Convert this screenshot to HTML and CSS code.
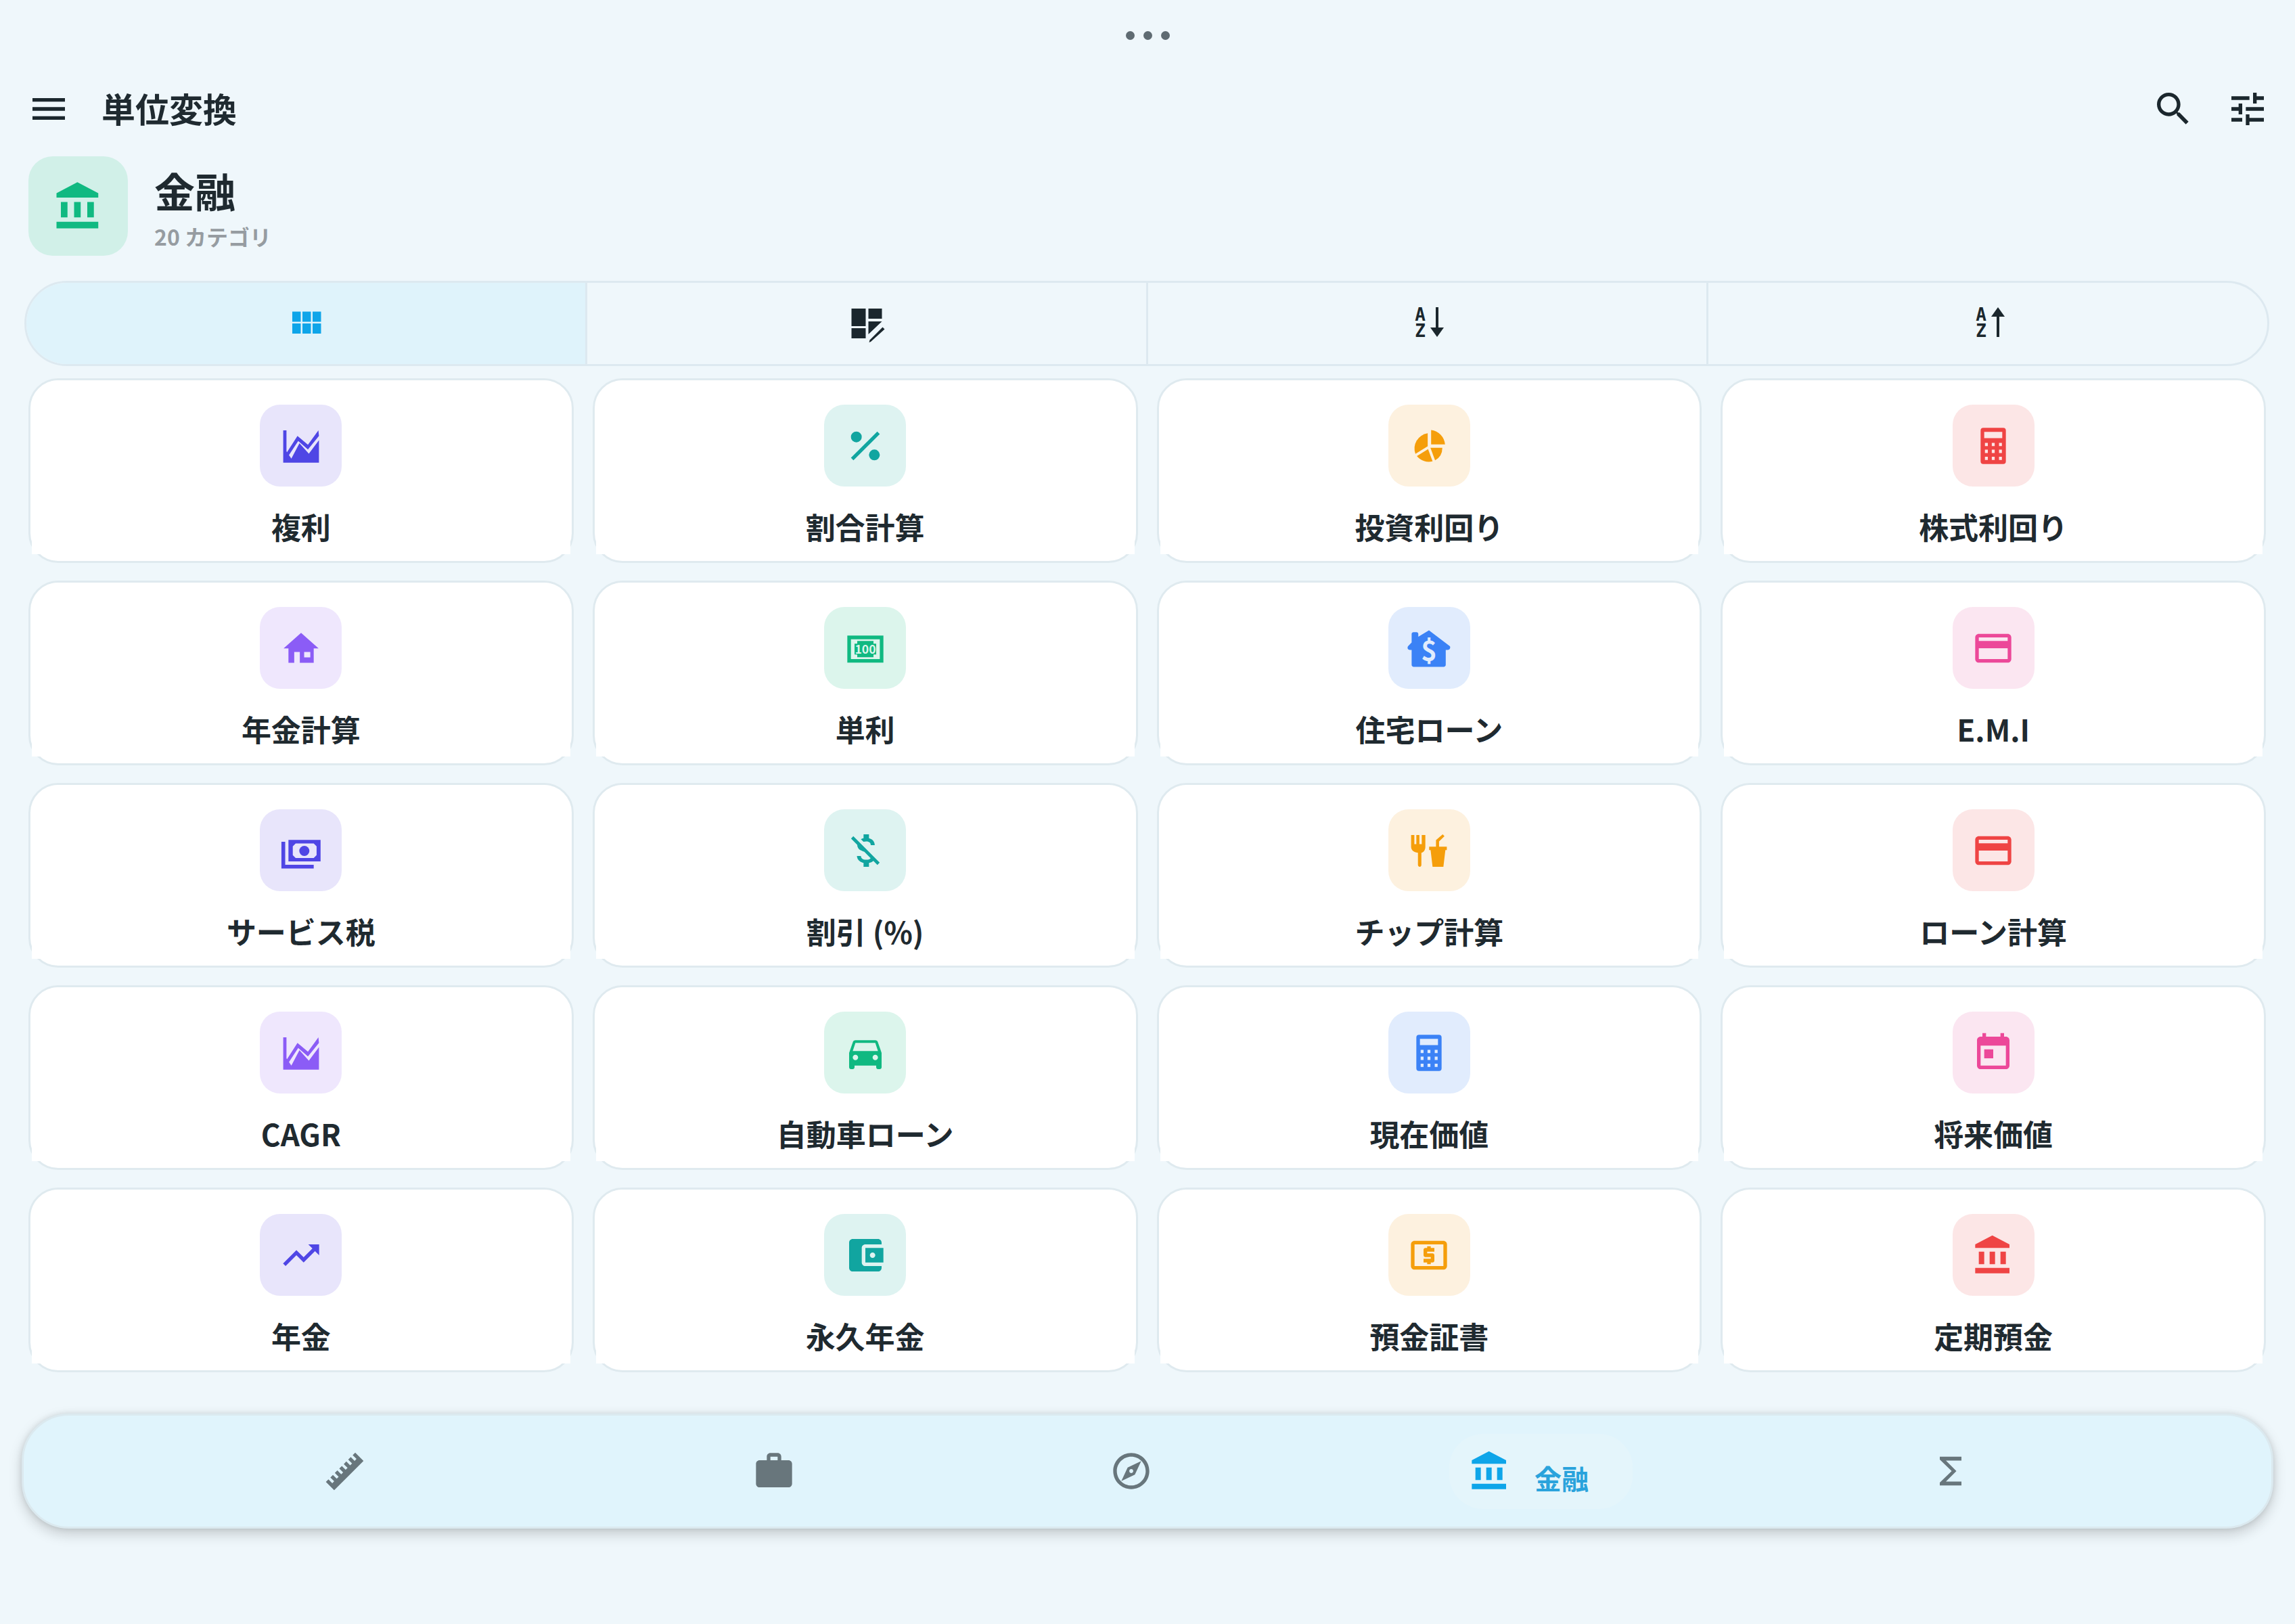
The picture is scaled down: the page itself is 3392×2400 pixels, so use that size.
FILE: index.html
```html
<!DOCTYPE html>
<html lang="ja">
  <head>
    <meta charset="UTF-8" />
    <meta name="viewport" content="width=device-width, initial-scale=1.0" />
    <title>単位変換</title>
    <link rel="stylesheet" href="styles.css">
  </head>
  <body>
    <svg class="sprite" xmlns="http://www.w3.org/2000/svg">
      <symbol id="i-bank" viewBox="0 0 24 24"><path d="M4 10v7h3v-7H4zm6 0v7h3v-7h-3zM2 22h19v-3H2v3zm14-12v7h3v-7h-3zm-4.500-9L2 6v2h19V6l-9.500-5z"/></symbol>
      <symbol id="i-area" viewBox="0 0 24 24"><path d="M2.100 3.400H3.900V15L6.600 19 11.100 10.500 16.300 16.300 21.900 8.800V21.300H2.100z" fill-rule="evenodd"/><path d="M3.900 15.900 10 6.500 15.800 11.300 21.600 3.400 21.900 6.500 15.800 14 10.400 9.300 4 19z"/></symbol>
      <symbol id="i-percent" viewBox="0 0 24 24"><circle cx="7" cy="7" r="3"/><circle cx="17" cy="17" r="3"/><path d="M5.400 20 4 18.600 18.600 4 20 5.400z"/></symbol>
      <symbol id="i-pie" viewBox="0 0 24 24"><path d="M13.200 3.200A8.800 8.800 0 0 1 20.900 11.200H13.200z"/><path d="M11.300 5A8.500 8.500 0 0 0 4.500 16.400L11.300 12.200z"/><path d="M5.300 17.600 11.500 13.800 14 20.500A8.400 8.400 0 0 1 5.300 17.600z"/><path d="M12.800 13H19.400A8 8 0 0 1 15.400 20z"/></symbol>
      <symbol id="i-calc" viewBox="0 0 24 24"><path fill-rule="evenodd" d="M6.500 2h11A1.500 1.500 0 0 1 19 3.500v17a1.500 1.500 0 0 1-1.500 1.500h-11A1.500 1.500 0 0 1 5 20.500v-17A1.500 1.500 0 0 1 6.500 2zM7 4.200v3.500h10V4.200zM7.400 10.300v1.800H9v-1.800zM11.200 10.300v1.800h1.600v-1.800zM15.200 10.300v1.800h1.600v-1.800zM7.400 14.100v1.800H9v-1.800zM11.200 14.100v1.800h1.600v-1.800zM15.200 14.100v1.800h1.600v-1.800zM7.400 18v1.800H9V18zM11.200 18v1.800h1.600V18zM15.200 18v1.800h1.600V18z"/></symbol>
      <symbol id="i-house" viewBox="0 0 24 24"><path fill-rule="evenodd" d="M12 3.500 21.700 12.100H19V20.100H11.300V14.100H8.200V20.100H5V12.100H2.300zM13.700 14.100v3h3.400v-3z"/></symbol>
      <symbol id="i-money" viewBox="0 0 24 24"><path fill-rule="evenodd" d="M2 5h20v15H2zM4 7v11h16V7zM7.500 8h9v1.500H18v6h-1.500V17h-9v-1.500H6v-6h1.500z"/><text class="icon-text" x="12" y="14.900" font-size="6.600" text-anchor="middle" font-weight="700">100</text></symbol>
      <symbol id="i-loan-home" viewBox="0 0 24 24"><path d="M12 2.100 23.600 10.900C24 11.500 23.700 12.900 22.500 12.900H21.300V21.200C21.300 21.800 20.800 22.300 20.200 22.300H3.500C2.900 22.300 2.400 21.800 2.400 21.200V12.900H1.300C0.100 12.900-0.100 11.600 0.400 10.900L2.400 8.800V4.100C2.400 3.500 2.900 3.100 3.400 3.100H5.100C5.700 3.100 6.100 3.500 6.100 4.100V5.600z"/><text class="icon-text" x="12" y="18.600" font-size="15" text-anchor="middle" font-weight="700">$</text></symbol>
      <symbol id="i-card" viewBox="0 0 24 24"><path d="M20 4H4c-1.110 0-1.990.890-1.990 2L2 18c0 1.110.890 2 2 2h16c1.110 0 2-.890 2-2V6c0-1.110-.890-2-2-2zm0 14H4v-6h16v6zm0-10H4V6h16v2z"/></symbol>
      <symbol id="i-payments" viewBox="0 0 24 24"><path fill-rule="evenodd" d="M5 6.100H22.800V18H5zM9 8.100 7.400 9.700V14.500L9 16.100H19L20.600 14.500V9.700L19 8.100z"/><circle cx="13.800" cy="12.200" r="2.800"/><path d="M1.100 7.100H3.200V19.900H19V21.900H1.100z"/></symbol>
      <symbol id="i-money-off" viewBox="0 0 24 24"><path d="M12.500 6.900c1.780 0 2.440.850 2.500 2.100h2.210c-.070-1.720-1.120-3.300-3.210-3.810V3h-3v2.160c-.530.120-1.030.300-1.480.540l1.470 1.470c.410-.170.910-.270 1.510-.270zM5.330 4.060L4.060 5.330 7.500 8.770c0 2.080 1.560 3.220 3.910 3.910l3.510 3.510c-.340.480-1.050.910-2.420.910-2.060 0-2.870-.920-2.980-2.100h-2.200c.120 2.190 1.760 3.420 3.680 3.830V21h3v-2.150c.960-.180 1.820-.550 2.450-1.120l2.220 2.220 1.270-1.270L5.330 4.060z"/></symbol>
      <symbol id="i-food" viewBox="0 0 24 24"><path d="M2.100 3.400h1.800v5H5v-5h1.700v5H8v-5h2v6.500c0 1.800-1 3-2.200 3.300V20c0 .6-.4 1-.9 1s-1-.4-1-1v-6.800C3 12.900 2.100 11.200 2.100 9.900z"/><path d="M12.100 9.800h3.800V6.200L19.600 3l1 1-3 2.900v2.900h4.300v1.900h-.8L20 21h-6l-1.100-9.300h-.8z"/></symbol>
      <symbol id="i-car" viewBox="0 0 24 24"><path d="M18.920 6.010C18.720 5.420 18.160 5 17.500 5h-11c-.660 0-1.210.420-1.420 1.010L3 12v8c0 .550.450 1 1 1h1c.550 0 1-.450 1-1v-1h12v1c0 .550.450 1 1 1h1c.550 0 1-.450 1-1v-8l-2.080-5.990zM6.500 16c-.830 0-1.500-.670-1.500-1.500S5.670 13 6.500 13s1.500.670 1.500 1.500S7.330 16 6.500 16zm11 0c-.830 0-1.500-.670-1.500-1.500s.670-1.500 1.500-1.500 1.500.670 1.500 1.500-.670 1.500-1.500 1.500zM5 11l1.500-4.500h11L19 11H5z"/></symbol>
      <symbol id="i-today" viewBox="0 0 24 24"><path d="M19 3h-1V1h-2v2H8V1H6v2H5c-1.110 0-1.990.900-1.990 2L3 19c0 1.100.890 2 2 2h14c1.100 0 2-.900 2-2V5c0-1.100-.900-2-2-2zm0 16H5V8h14v11zM7 10h5v5H7z"/></symbol>
      <symbol id="i-trend" viewBox="0 0 24 24"><path d="M16 6l2.290 2.290-4.880 4.880-4-4L2 16.590 3.410 18l6-6 4 4 6.300-6.290L22 12V6z"/></symbol>
      <symbol id="i-wallet" viewBox="0 0 24 24"><path d="M21 18v1c0 1.100-.900 2-2 2H5c-1.110 0-2-.900-2-2V5c0-1.100.890-2 2-2h14c1.100 0 2 .900 2 2v1h-9c-1.110 0-2 .900-2 2v8c0 1.100.890 2 2 2h9zm-9-2h10V8H12v8zm4-2.500c-.830 0-1.500-.670-1.500-1.500s.670-1.500 1.500-1.500 1.500.670 1.500 1.500-.670 1.500-1.500 1.500z"/></symbol>
      <symbol id="i-atm" viewBox="0 0 24 24"><path d="M11 17h2v-1h1c.550 0 1-.450 1-1v-3c0-.550-.450-1-1-1h-3v-1h4V8h-2V7h-2v1h-1c-.550 0-1 .450-1 1v3c0 .550.450 1 1 1h3v1H9v2h2v1zm9-13H4c-1.110 0-1.990.890-1.990 2L2 18c0 1.110.890 2 2 2h16c1.110 0 2-.890 2-2V6c0-1.110-.890-2-2-2zm0 14H4V6h16v12z"/></symbol>
    </svg>

    <div class="handle"><span></span><span></span><span></span></div>

    <header class="appbar">
      <svg class="icon" viewBox="0 0 24 24"><path d="M3 18h18v-2H3v2zm0-5h18v-2H3v2zm0-7v2h18V6H3z"/></svg>
      <h1>単位変換</h1>
      <svg class="icon" viewBox="0 0 24 24"><path d="M15.500 14h-.790l-.280-.270C15.410 12.590 16 11.110 16 9.500 16 5.910 13.090 3 9.500 3S3 5.910 3 9.500 5.910 16 9.500 16c1.610 0 3.090-.590 4.230-1.570l.270.280v.790l5 4.990L20.490 19l-4.990-5zm-6 0C7.010 14 5 11.990 5 9.500S7.010 5 9.500 5 14 7.010 14 9.500 11.990 14 9.500 14z"/></svg>
      <svg class="icon" viewBox="0 0 24 24"><path d="M3 17v2h6v-2H3zM3 5v2h10V5H3zm10 16v-2h8v-2h-8v-2h-2v6h2zM7 9v2H3v2h4v2h2V9H7zm14 4v-2H11v2h10zm-6-4h2V7h4V5h-4V3h-2v6z"/></svg>
    </header>

    <section class="category">
      <div class="category-icon"><svg><use href="#i-bank"/></svg></div>
      <div class="category-text">
        <h2>金融</h2>
        <p>20 カテゴリ</p>
      </div>
    </section>

    <div class="segments">
      <div class="segment active">
        <svg class="seg-grid" viewBox="0 0 24 24"><path d="M4 11h5V5H4v6zm0 7h5v-6H4v6zm6 0h5v-6h-5v6zm6 0h5v-6h-5v6zm-6-7h5V5h-5v6zm6-6v6h5V5h-5z"/></svg>
      </div>
      <div class="segment">
        <svg class="seg-icon" viewBox="-2.500 -3 52 52"><path d="M1 1h21v26H1zM26 1h20v15H26zM1 30h21v15H1zM26 20h20L26 39z"/><path d="M29.500 50 27 51 28 47.500 47 28.500 50 31.500z"/></svg>
      </div>
      <div class="segment">
        <svg class="seg-icon" viewBox="-5 0 52 52"><text class="sort-letter" x="11" y="22">A</text><text class="sort-letter" x="11" y="46">Z</text><path d="M34 2h4v32h-4z"/><path d="M26 32h20L36 46z"/></svg>
      </div>
      <div class="segment">
        <svg class="seg-icon" viewBox="-5 0 52 52"><text class="sort-letter" x="11" y="22">A</text><text class="sort-letter" x="11" y="46">Z</text><path d="M34 14h4v32h-4z"/><path d="M26 16h20L36 2z"/></svg>
      </div>
    </div>

    <main class="grid">
      <div class="card tone-indigo"><div class="card-body"><div class="tile"><svg><use href="#i-area"/></svg></div><span>複利</span></div></div>
      <div class="card tone-teal"><div class="card-body"><div class="tile"><svg><use href="#i-percent"/></svg></div><span>割合計算</span></div></div>
      <div class="card tone-amber"><div class="card-body"><div class="tile"><svg><use href="#i-pie"/></svg></div><span>投資利回り</span></div></div>
      <div class="card tone-red"><div class="card-body"><div class="tile"><svg><use href="#i-calc"/></svg></div><span>株式利回り</span></div></div>

      <div class="card tone-violet"><div class="card-body"><div class="tile"><svg><use href="#i-house"/></svg></div><span>年金計算</span></div></div>
      <div class="card tone-green"><div class="card-body"><div class="tile"><svg><use href="#i-money"/></svg></div><span>単利</span></div></div>
      <div class="card tone-blue"><div class="card-body"><div class="tile"><svg><use href="#i-loan-home"/></svg></div><span>住宅ローン</span></div></div>
      <div class="card tone-pink"><div class="card-body"><div class="tile"><svg><use href="#i-card"/></svg></div><span>E.M.I</span></div></div>

      <div class="card tone-indigo"><div class="card-body"><div class="tile"><svg><use href="#i-payments"/></svg></div><span>サービス税</span></div></div>
      <div class="card tone-teal"><div class="card-body"><div class="tile"><svg><use href="#i-money-off"/></svg></div><span>割引 (%)</span></div></div>
      <div class="card tone-amber"><div class="card-body"><div class="tile"><svg><use href="#i-food"/></svg></div><span>チップ計算</span></div></div>
      <div class="card tone-red"><div class="card-body"><div class="tile"><svg><use href="#i-card"/></svg></div><span>ローン計算</span></div></div>

      <div class="card tone-violet"><div class="card-body"><div class="tile"><svg><use href="#i-area"/></svg></div><span>CAGR</span></div></div>
      <div class="card tone-green"><div class="card-body"><div class="tile"><svg><use href="#i-car"/></svg></div><span>自動車ローン</span></div></div>
      <div class="card tone-blue"><div class="card-body"><div class="tile"><svg><use href="#i-calc"/></svg></div><span>現在価値</span></div></div>
      <div class="card tone-pink"><div class="card-body"><div class="tile"><svg><use href="#i-today"/></svg></div><span>将来価値</span></div></div>

      <div class="card tone-indigo"><div class="card-body"><div class="tile"><svg><use href="#i-trend"/></svg></div><span>年金</span></div></div>
      <div class="card tone-teal"><div class="card-body"><div class="tile"><svg><use href="#i-wallet"/></svg></div><span>永久年金</span></div></div>
      <div class="card tone-amber"><div class="card-body"><div class="tile"><svg><use href="#i-atm"/></svg></div><span>預金証書</span></div></div>
      <div class="card tone-red"><div class="card-body"><div class="tile"><svg><use href="#i-bank"/></svg></div><span>定期預金</span></div></div>
    </main>

    <nav class="bottom-nav">
      <svg class="nav-icon" viewBox="0 0 24 24"><path transform="rotate(-45 12 12)" d="M.5 15.500V9h2v3h1.500V9h2v3h1.500V9h2v3H11V9h2v3h1.500V9h2v3H18V9h2v3h1.500V9h2v6.500z"/></svg>
      <svg class="nav-icon" viewBox="0 0 24 24"><path d="M20 6h-4V4c0-1.110-.890-2-2-2h-4c-1.110 0-2 .890-2 2v2H4c-1.110 0-1.990.890-1.990 2L2 19c0 1.110.890 2 2 2h16c1.110 0 2-.890 2-2V8c0-1.110-.890-2-2-2zm-6 0h-4V4h4v2z"/></svg>
      <svg class="nav-icon" viewBox="0 0 24 24"><path d="M12 2C6.480 2 2 6.480 2 12s4.480 10 10 10 10-4.480 10-10S17.520 2 12 2zm0 18c-4.410 0-8-3.590-8-8s3.590-8 8-8 8 3.590 8 8-3.590 8-8 8zm-5.500-2.500l7.510-3.490L17.500 6.500 9.990 9.990 6.500 17.500zm5.500-6.600c.610 0 1.100.490 1.100 1.100s-.490 1.100-1.100 1.100-1.100-.490-1.100-1.100.490-1.100 1.100-1.100z"/></svg>
      <div class="nav-active">
        <svg class="nav-icon"><use href="#i-bank"/></svg>
        <span>金融</span>
      </div>
      <svg class="nav-icon" viewBox="0 0 24 24"><path d="M18 4H6v1.600L12.600 12 6 18.400V20h12v-2.200H9.400L15.200 12 9.400 6.200H18z"/></svg>
    </nav>
  </body>
</html>
```

FILE: styles.css
```css
body {
  font-family: "Noto Sans CJK JP", "Noto Sans", sans-serif;
  color: #1f2a30;
  margin: 0;
  width: 3392px;
  height: 2400px;
  overflow: hidden;
  background-color: #eff7fb;
}

svg {
  fill: currentColor;
}

.sprite {
  display: none;
}

.handle {
  height: 104px;
  display: flex;
  justify-content: center;
  align-items: center;
  gap: 13px;
}

.handle span {
  width: 13px;
  height: 13px;
  border-radius: 50%;
  background: #5f6b72;
}

.appbar {
  margin-top: 25px;
  padding: 0 38px 0 40px;
  display: flex;
  align-items: center;
  height: 64px;
  gap: 46px;
}

.appbar h1 {
  margin: 0 0 4px;
  flex: 1;
  font-size: 50px;
  line-height: 60px;
  font-weight: 700;
}

.icon {
  width: 64px;
  height: 64px;
  color: #1b272d;
}

.category {
  margin-top: 38px;
  padding-left: 42px;
  display: flex;
  gap: 39px;
}

.category-icon {
  width: 147px;
  height: 147px;
  border-radius: 36px;
  background: #d1f0e8;
  color: #10b981;
  display: flex;
  align-items: center;
  justify-content: center;
}

.category-icon svg {
  width: 78px;
  height: 78px;
}

.category-text {
  padding-top: 14px;
}

.category-text h2 {
  margin: 0;
  font-size: 60px;
  line-height: 72px;
  font-weight: 700;
}

.category-text p {
  margin: 10px 0 0;
  font-size: 32px;
  line-height: 44px;
  font-weight: 700;
  color: #969ca1;
}

.segments {
  margin: 37px 38px 0 36px;
  height: 126px;
  box-sizing: border-box;
  display: flex;
  border: 3px solid #dde9f0;
  border-radius: 63px;
  overflow: hidden;
}

.segment {
  flex: 1;
  display: flex;
  align-items: center;
  justify-content: center;
  color: #1b272d;
}

.segment + .segment {
  border-left: 3px solid #dde9f0;
}

.segment.active {
  background: #dff3fb;
  color: #0ea5e9;
}

.seg-grid {
  width: 60px;
  height: 60px;
}

.seg-icon {
  width: 52px;
  height: 52px;
  overflow: visible;
}

.sort-letter {
  font-family: "DejaVu Sans Mono", monospace;
  font-weight: 700;
  font-size: 26px;
  text-anchor: middle;
}

.grid {
  margin-top: 18px;
  padding: 0 43px 0 42px;
  display: grid;
  grid-template-columns: repeat(4, 1fr);
  grid-auto-rows: 273px;
  gap: 26px 28px;
}

.card {
  box-sizing: border-box;
  display: flex;
  border: 3px solid #dfeaef;
  border-radius: 44px;
  padding: 0 2px 10px;
  background: #fff;
}

/* the body is wider than the rounded bottom corners, so it pokes out of them */
.card-body {
  flex: 1;
  background: #fff;
  border-radius: 40px 40px 0 0;
  display: flex;
  flex-direction: column;
  align-items: center;
  padding-top: 36px;
}

.card-body span {
  margin-top: 29px;
  font-size: 44px;
  line-height: 60px;
  font-weight: 700;
  color: #1f2a30;
}

.tile {
  width: 121px;
  height: 121px;
  border-radius: 30px;
  display: flex;
  align-items: center;
  justify-content: center;
  color: var(--tone);
  background: var(--tint);
}

.tile svg {
  width: 64px;
  height: 64px;
}

.icon-text {
  fill: var(--tint);
}

.tone-indigo { --tone: #4f46e5; --tint: #e8e5fb; }
.tone-teal { --tone: #11a5a0; --tint: #def3f1; }
.tone-amber { --tone: #f59e0b; --tint: #fdf1df; }
.tone-red { --tone: #ef4444; --tint: #fce6e6; }
.tone-violet { --tone: #8b5cf6; --tint: #efe7fd; }
.tone-green { --tone: #10b981; --tint: #dcf5ec; }
.tone-blue { --tone: #3b82f6; --tint: #e1ecfd; }
.tone-pink { --tone: #ec4899; --tint: #fbe6f1; }

.bottom-nav {
  box-sizing: border-box;
  margin: 61px 32px 0;
  height: 170px;
  padding-left: 442px;
  display: flex;
  align-items: center;
  background: #e0f4fc;
  border: 3px solid #dbe9ef;
  border-radius: 70px;
  box-shadow: 0 8px 20px rgba(0, 0, 0, 0.18), 0 0 8px rgba(0, 0, 0, 0.1);
  color: #68767c;
}

.nav-icon {
  width: 64px;
  height: 64px;
  flex: none;
}

.bottom-nav > :nth-child(2) {
  margin-left: 571px;
}

.bottom-nav > :nth-child(3) {
  margin-left: 464px;
}

.bottom-nav > :nth-child(4) {
  margin-left: 438px;
}

.bottom-nav > :nth-child(5) {
  margin-left: 438px;
}

.nav-active {
  width: 271px;
  height: 111px;
  box-sizing: border-box;
  padding-left: 28px;
  display: flex;
  align-items: center;
  gap: 34px;
  border-radius: 50px;
  background: #e4f5fb;
  color: #0ea5e9;
}

.nav-active span {
  padding-top: 20px;
  font-size: 40px;
  line-height: 50px;
  font-weight: 700;
  color: #2aa3dc;
}
```
